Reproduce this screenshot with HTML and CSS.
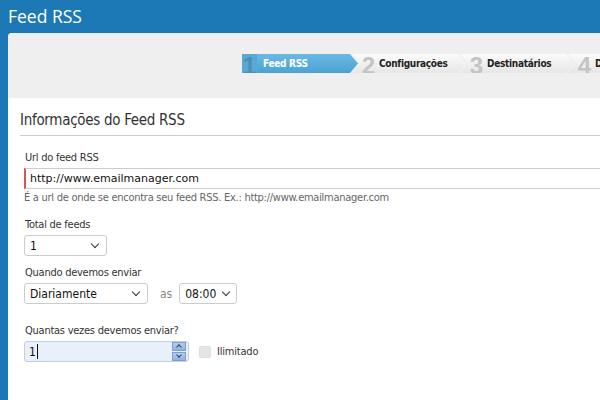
FILE: index.html
```html
<!DOCTYPE html>
<html lang="pt-BR">
<head>
    <meta charset="UTF-8">
    <title>Feed RSS</title>
    <link rel="stylesheet" href="styles.css">
</head>
<body>
    <div class="page-title">Feed RSS</div>

    <div class="panel">
        <div class="wizard-bar">
            <div class="steps">
                <div class="step active"><span class="step-num">1</span><span class="step-label">Feed RSS</span></div>
                <div class="step"><span class="step-num">2</span><span class="step-label">Configurações</span></div>
                <div class="step"><span class="step-num">3</span><span class="step-label">Destinatários</span></div>
                <div class="step"><span class="step-num">4</span><span class="step-label">Disparo</span></div>
            </div>
        </div>

        <div class="form-area">
            <h2 class="section-title">Informações do Feed RSS</h2>

            <div class="field first">
                <label class="field-label">Url do feed RSS</label>
                <input class="text-input required" type="text" value="http://www.emailmanager.com">
                <div class="help">É a url de onde se encontra seu feed RSS. Ex.: http://www.emailmanager.com</div>
            </div>

            <div class="field after-help">
                <label class="field-label">Total de feeds</label>
                <div class="select w-small"><span>1</span><i class="chev"></i></div>
            </div>

            <div class="field">
                <label class="field-label">Quando devemos enviar</label>
                <div class="row">
                    <div class="select w-medium"><span>Diariamente</span><i class="chev"></i></div>
                    <span class="as">as</span>
                    <div class="select w-time"><span>08:00</span><i class="chev"></i></div>
                </div>
            </div>

            <div class="field spaced">
                <label class="field-label">Quantas vezes devemos enviar?</label>
                <div class="row">
                    <div class="number-input">
                        <span class="value">1</span><span class="caret"></span>
                        <div class="spinner">
                            <div class="spin up"></div>
                            <div class="spin down"></div>
                        </div>
                    </div>
                    <label class="check"><span class="box"></span>Ilimitado</label>
                </div>
            </div>
        </div>
    </div>
</body>
</html>
```

FILE: styles.css
```css
body {
    margin: 0;
    background-color: #1c79b6;
    font-family: "DejaVu Sans Condensed", "Liberation Sans", sans-serif;
    color: #333;
    height: 400px;
    overflow: hidden;
}

.page-title {
    color: white;
    font-family: "Open Sans", sans-serif;
    font-size: 17.5px;
    line-height: 33px;
    height: 33px;
    padding-left: 8px;
}

.panel {
    margin-left: 8px;
    background-color: white;
    border-top-left-radius: 4px;
    height: 367px;
    overflow: hidden;
}

.wizard-bar {
    background-color: #efefef;
    height: 65px;
    padding-top: 21px;
    box-sizing: border-box;
}

.steps {
    display: flex;
    margin-left: 234px;
    width: 600px;
}

.step {
    height: 19px;
    box-sizing: border-box;
    flex-shrink: 0;
    display: flex;
    align-items: center;
    background: linear-gradient(#fbfbfb, #e6e6e6);
    clip-path: polygon(0 0, calc(100% - 8px) 0, 100% 50%, calc(100% - 8px) 100%, 0 100%, 8px 50%);
    margin-right: -6px;
    padding-left: 9px;
}

.step:nth-child(1) { width: 116px; padding-left: 0; clip-path: polygon(0 0, calc(100% - 8px) 0, 100% 50%, calc(100% - 8px) 100%, 0 100%); }
.step:nth-child(2) { width: 114px; }
.step:nth-child(3) { width: 114px; }
.step:nth-child(4) { width: 120px; }

.step.active {
    background: linear-gradient(#6ab9e3, #4ca3d4);
}

.step-num {
    font-family: "Liberation Sans", sans-serif;
    font-size: 24px;
    font-weight: bold;
    color: #c4c4c4;
    width: 15px;
    height: 19px;
    flex-shrink: 0;
    line-height: 24px;
    text-align: center;
}

.step.active .step-num {
    color: #4d8fb5;
    background-color: #5aa9d5;
}

.step-label {
    font-size: 10px;
    font-weight: bold;
    letter-spacing: -0.3px;
    color: #222;
    margin-left: 3px;
    white-space: nowrap;
}

.step.active .step-label {
    color: white;
    margin-left: 6px;
}

.form-area {
    padding: 13px 0 0 12px;
}

.section-title {
    margin: 0;
    font-size: 15px;
    letter-spacing: -0.3px;
    font-weight: normal;
    color: #333;
    padding-bottom: 6px;
    border-bottom: 1px solid #ccc;
}

.field {
    padding-left: 4px;
    margin-top: 10px;
}

.field.first {
    margin-top: 15px;
}

.field.after-help {
    margin-top: 14px;
}

.field.spaced {
    margin-top: 20px;
}

.field-label {
    display: block;
    font-size: 11px;
    line-height: 13px;
    letter-spacing: -0.25px;
    color: #333;
    margin-bottom: 4px;
    padding-left: 1px;
}

.text-input {
    display: block;
    width: 100%;
    box-sizing: border-box;
    height: 21px;
    border: 1px solid #ccc;
    border-right: none;
    border-left: 2px solid #d9534f;
    padding: 0 4px;
    font-family: "DejaVu Sans", sans-serif;
    font-size: 11px;
    color: #111;
    outline: none;
}

.help {
    font-size: 11px;
    line-height: 13px;
    letter-spacing: -0.27px;
    color: #666;
    margin-top: 2px;
}

.row {
    display: flex;
    align-items: center;
}

.select {
    height: 21px;
    box-sizing: border-box;
    border: 1px solid #ccc;
    border-radius: 3px;
    display: flex;
    align-items: center;
    justify-content: space-between;
    padding: 0 8px 0 5px;
    font-size: 12px;
    color: #111;
    background-color: white;
}

.w-small { width: 83px; }
.w-medium { width: 124px; }
.w-time { width: 58px; padding-right: 7px; }

.chev {
    width: 5px;
    height: 5px;
    border-right: 1.5px solid #333;
    border-bottom: 1.5px solid #333;
    transform: rotate(45deg);
    margin-top: -4px;
}

.as {
    font-size: 12px;
    color: #888;
    margin: 0 7px 0 12px;
}

.number-input {
    width: 165px;
    height: 21px;
    box-sizing: border-box;
    border: 1px solid #c5cfdc;
    border-radius: 3px;
    background-color: #e8f0fc;
    display: flex;
    align-items: center;
    padding-left: 4px;
    font-size: 12px;
    color: #111;
}

.caret {
    width: 1px;
    height: 15px;
    background-color: #111;
    margin-left: 1px;
}

.spinner {
    margin-left: auto;
    margin-right: 2px;
    width: 14px;
    display: flex;
    flex-direction: column;
    gap: 1px;
}

.spin {
    height: 7px;
    background: linear-gradient(#b4cdf0, #8fb1e4);
    border: 1px solid #7f9fcf;
    position: relative;
}

.spin::after {
    content: "";
    position: absolute;
    left: 4px;
    width: 3px;
    height: 3px;
    border-left: 1px solid #345;
    border-top: 1px solid #345;
}

.spin.up::after { top: 2px; transform: rotate(45deg); }
.spin.down::after { top: 0; transform: rotate(-135deg); }

.check {
    display: flex;
    align-items: center;
    margin-left: 10px;
    font-size: 11px;
    letter-spacing: -0.2px;
    color: #333;
}

.box {
    width: 10px;
    height: 10px;
    border: 1px solid #ddd;
    background-color: #e6e6e6;
    border-radius: 2px;
    margin-right: 6px;
}
```
